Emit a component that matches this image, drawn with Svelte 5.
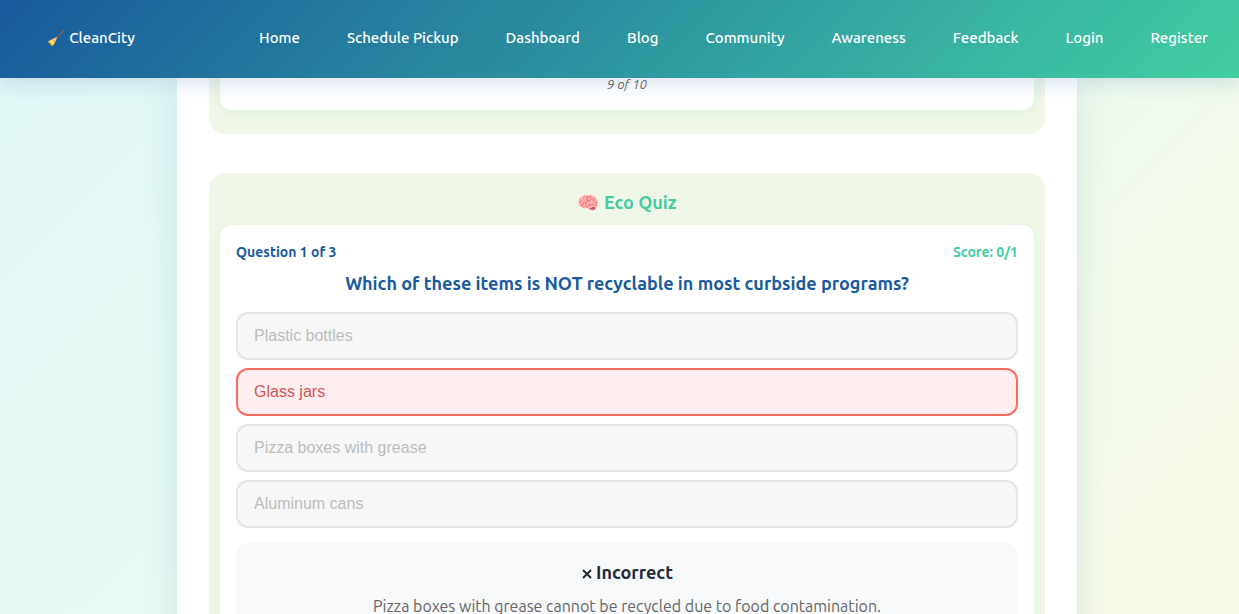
<script>
  const links = ['Home', 'Schedule Pickup', 'Dashboard', 'Blog', 'Community', 'Awareness', 'Feedback', 'Login', 'Register'];
  const options = ['Plastic bottles', 'Glass jars', 'Pizza boxes with grease', 'Aluminum cans'];
  let selected = $state(1);
</script>

<div class="page">
  <header>
    <a class="brand" href="#home"><span class="emoji">🧹</span> CleanCity</a>
    <nav>
      {#each links as link}
        <a href={'#' + link.toLowerCase().replace(' ', '-')}>{link}</a>
      {/each}
    </nav>
  </header>

  <main>
    <div class="content">
      <section class="tips">
        <div class="card tip"><p class="counter">9 of 10</p></div>
      </section>

      <section class="quiz">
        <h2><span class="emoji">🧠</span> Eco Quiz</h2>
        <div class="card">
          <div class="status">
            <span>Question 1 of 3</span>
            <span class="score">Score: 0/1</span>
          </div>
          <h3>Which of these items is NOT recyclable in most curbside programs?</h3>
          <div class="options">
            {#each options as option, i}
              <button class:incorrect={i === selected} disabled>{option}</button>
            {/each}
          </div>
          <div class="feedback">
            <h4>
              <svg width="12" height="10" viewBox="0 0 12 10" aria-hidden="true"><path d="M2 1L10 9M10 1L2 9" /></svg>
              <span>Incorrect</span>
            </h4>
            <p>Pizza boxes with grease cannot be recycled due to food contamination.</p>
          </div>
        </div>
      </section>
    </div>
  </main>
</div>

<style>
  :global(body) {
    margin: 0;
    color: #222b3a;
    font-family: Ubuntu, 'Noto Sans', sans-serif;
    font-size: 16px;
  }
  .page {
    display: flex;
    flex-direction: column;
    height: 100vh;
    overflow: hidden;
    background: linear-gradient(135deg, #e1f7f7 0%, #e8faf3 40%, #f2faec 75%, #f9fae7 100%);
  }
  header {
    z-index: 1;
    display: flex;
    flex: none;
    align-items: center;
    justify-content: space-between;
    box-sizing: border-box;
    min-height: 78px;
    padding: 0 31px 3px 47px;
    background: linear-gradient(135deg, #185a9d, #43cea2);
    box-shadow: 0 4px 20px rgba(24, 90, 157, 0.18);
    font-size: 15px;
    font-weight: 500;
  }
  header a {
    color: #fff;
    text-decoration: none;
    white-space: nowrap;
  }
  nav {
    display: flex;
    gap: 47px;
  }
  .emoji {
    font-family: 'Noto Color Emoji', sans-serif;
  }
  main {
    flex: 1;
    min-height: 0;
    padding-left: 15px;
  }
  .content {
    box-sizing: border-box;
    max-width: 900px;
    margin: 0 auto;
    padding: 0 32px;
    background: #fff;
    box-shadow: 0 8px 32px rgba(24, 90, 157, 0.13);
  }
  section {
    padding: 16px 11px 24px;
    border-radius: 16px;
    background: #f1f7e8;
  }
  .tips {
    margin-bottom: 39px;
    padding-top: 0;
    border-radius: 0 0 16px 16px;
  }
  .card {
    padding: 16px;
    border-radius: 12px;
    background: #fff;
    box-shadow: 0 2px 12px rgba(67, 206, 162, 0.1);
  }
  .tip {
    padding: 0 16px 20px;
    border-radius: 0 0 12px 12px;
  }
  .counter {
    margin: 0;
    color: #666;
    font-size: 13px;
    font-style: italic;
    line-height: 12px;
    text-align: center;
  }
  h2, h3, h4, p {
    margin: 0;
    text-align: center;
  }
  h2, h3, h4 {
    font-size: 18px;
    font-weight: 600;
    line-height: 26px;
  }
  h2 {
    margin-bottom: 9px;
    color: #43cea2;
  }
  .status {
    display: flex;
    justify-content: space-between;
    color: #185a9d;
    font-size: 14px;
    font-weight: 600;
    line-height: 22px;
  }
  .score {
    color: #43cea2;
  }
  h3 {
    margin: 7px 0 16px;
    color: #185a9d;
  }
  .options {
    display: grid;
    gap: 8px;
  }
  button {
    min-height: 48px;
    padding: 0 16px;
    border: 2px solid #e5e5e5;
    border-radius: 12px;
    background: #f7f7f7;
    color: #bdbdbd;
    font-family: 'Liberation Sans', Arial, sans-serif;
    font-size: 16px;
    text-align: left;
  }
  button.incorrect {
    border-color: #f76c5e;
    background: #ffeeef;
    color: #d35459;
  }
  .feedback {
    margin-top: 15px;
    padding: 16px;
    border-radius: 12px;
    background: #f7f9fb;
  }
  h4 {
    display: flex;
    align-items: center;
    justify-content: center;
    gap: 3px;
  }
  .feedback p {
    margin-top: 8px;
    color: #666;
    line-height: 26px;
  }
  svg {
    margin-top: 3px;
    fill: none;
    stroke: #222b3a;
    stroke-width: 2;
  }
</style>
